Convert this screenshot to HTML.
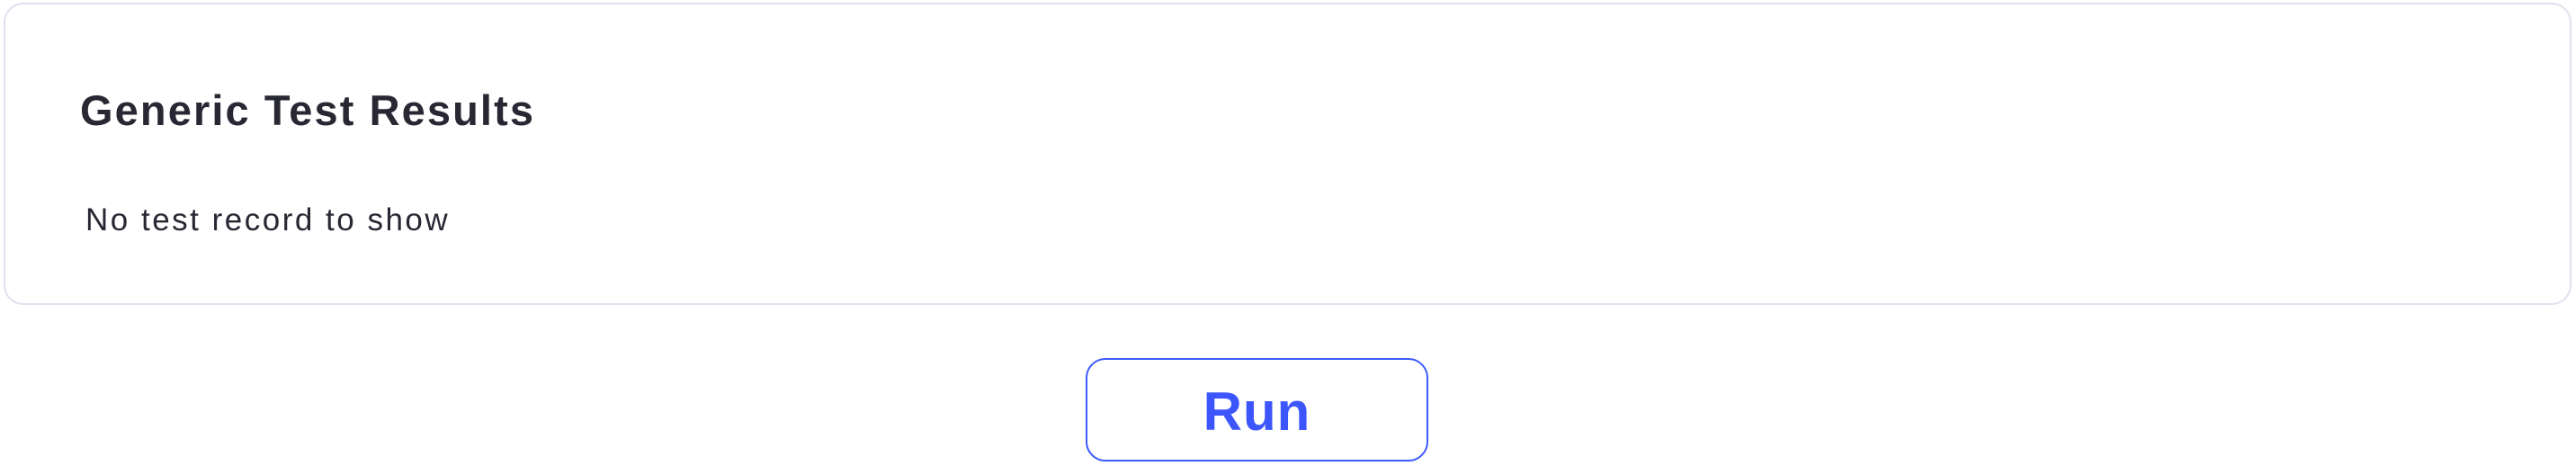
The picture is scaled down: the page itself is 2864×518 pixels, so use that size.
<!DOCTYPE html>
<html><head><meta charset="utf-8"><style>
html,body{margin:0;padding:0;background:#fff;width:2864px;height:518px;overflow:hidden;font-family:"Liberation Sans",sans-serif;}
.card{position:absolute;left:4px;top:3px;width:2851px;height:332px;border:2.5px solid #e1e0ee;border-radius:22px;}
.t{position:absolute;white-space:nowrap;transform-origin:0 0;color:#272833;}
.title{left:89px;top:95px;font-size:47px;font-weight:bold;line-height:56px;letter-spacing:2.1px;}
.body{left:95px;top:223px;font-size:35px;line-height:44px;letter-spacing:2.5px;}
.btn{position:absolute;left:1207px;top:398px;width:377px;height:111px;border:2.5px solid #3d5afe;border-radius:22px;}
.run{position:absolute;left:0;right:0;top:27px;text-align:center;font-size:60px;font-weight:bold;line-height:62px;letter-spacing:1px;color:#3d55fc;}
</style></head><body>
<div class="card"></div>
<div class="t title">Generic Test Results</div>
<div class="t body">No test record to show</div>
<div class="btn"><div class="run">Run</div></div>
</body></html>
